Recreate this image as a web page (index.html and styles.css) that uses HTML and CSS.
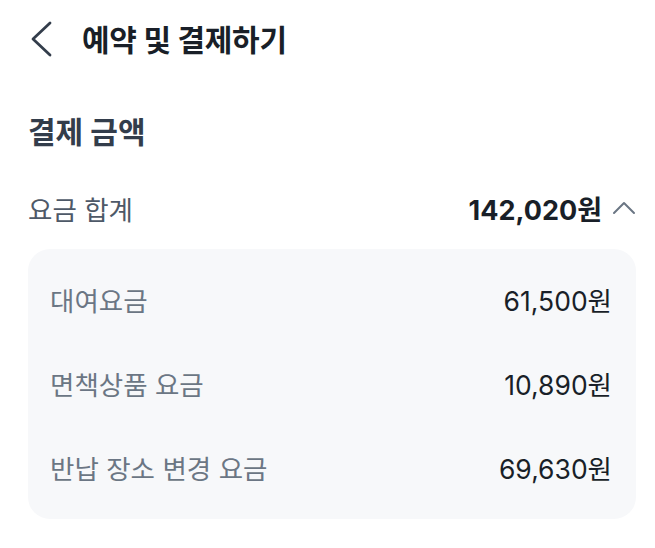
FILE: index.html
```html
<!DOCTYPE html>
<html lang="ko">
<head>
<meta charset="utf-8">
<link rel="stylesheet" href="styles.css">
</head>
<body>
<div class="page">
  <header class="header">
    <svg class="back" width="26" height="40" viewBox="0 0 26 40"><path d="M22 3 L5 19 L22 35" fill="none" stroke="#333d4b" stroke-width="2.8" stroke-linecap="round" stroke-linejoin="round"/></svg>
    <h1 class="title">예약 및 결제하기</h1>
  </header>
  <h2 class="section-title">결제 금액</h2>
  <div class="total">
    <span class="total-label">요금 합계</span>
    <span class="total-value">142,020원
      <svg class="up" width="24" height="16" viewBox="0 0 24 16"><path d="M2 13 L12 3 L22 13" fill="none" stroke="#6b7684" stroke-width="2" stroke-linecap="round" stroke-linejoin="round"/></svg>
    </span>
  </div>
  <div class="detail">
    <div class="row"><span class="label">대여요금</span><span class="value">61,500원</span></div>
    <div class="row"><span class="label">면책상품 요금</span><span class="value">10,890원</span></div>
    <div class="row"><span class="label">반납 장소 변경 요금</span><span class="value">69,630원</span></div>
  </div>
</div>
</body>
</html>
```
FILE: styles.css
```css
* { box-sizing: border-box; }
html, body { margin: 0; padding: 0; background: #fff; }
body { font-family: "Inter", "Noto Sans CJK KR", sans-serif; color: #191f28; }
.page { width: 636px; padding-left: 28px; }
.header { display: flex; align-items: center; height: 80px; }
.back { display: block; }
.title { margin: 0 0 0 28px; font-size: 30px; font-weight: 700; line-height: 38px; color: #191f28; letter-spacing: -0.3px; }
.section-title { margin: 33px 0 0 0; font-size: 30px; font-weight: 700; line-height: 38px; color: #333d4b; }
.total { display: flex; justify-content: space-between; align-items: center; margin-top: 40px; height: 34px; }
.total-label { font-size: 26.5px; color: #4e5968; }
.total-value { display: flex; align-items: center; gap: 10px; font-size: 27px; font-weight: 700; color: #191f28; }
.up { display: block; }
.detail { margin-top: 24px; background: #f7f8fa; border-radius: 22px; padding: 8px 24px 10px 22px; }
.row { display: flex; justify-content: space-between; align-items: center; height: 84px; font-size: 26.5px; }
.label { color: #6b7684; }
.value { color: #191f28; }
```
